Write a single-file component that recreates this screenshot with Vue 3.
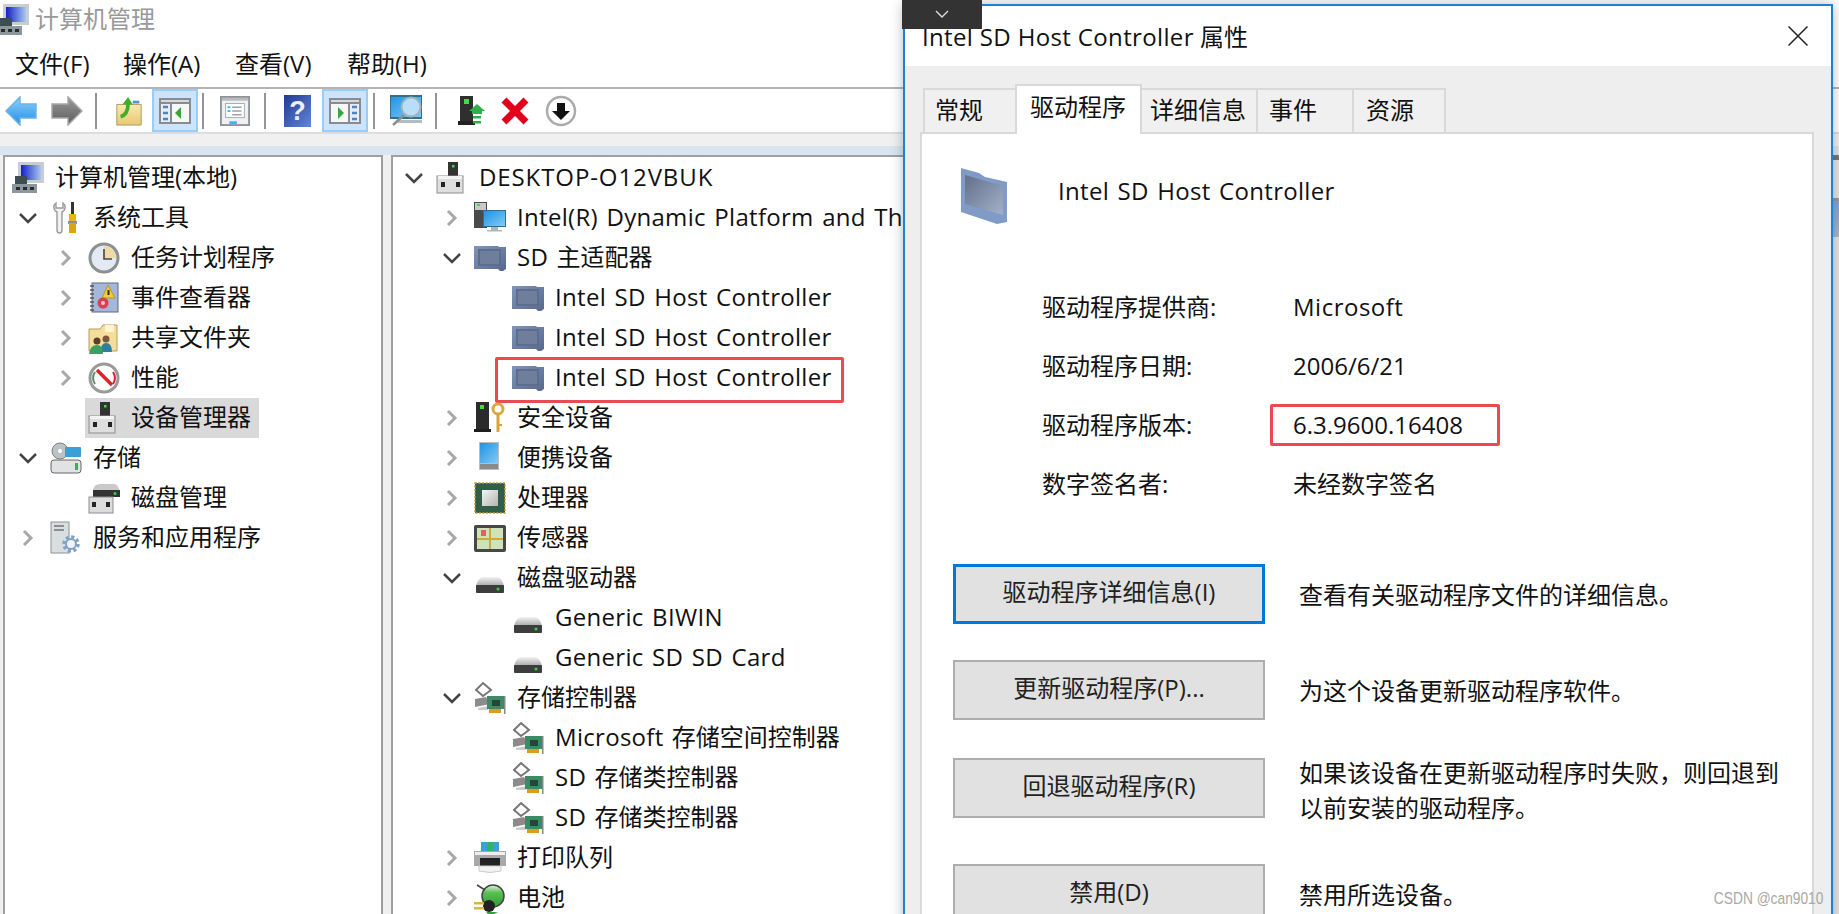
<script setup>
const base = '<rect x="1" y="15" width="24" height="16" fill="#dcdcdc" stroke="#8d8d8d"/><rect x="4" y="20" width="4" height="5" fill="#222"/><rect x="18" y="20" width="4" height="5" fill="#222"/>'
const chipCtl = '<path d="M9 1 L17 8 L9 14 L2 8Z" fill="#fff" stroke="#777" stroke-width="2"/><path d="M1 17 L12 15 L16 22 L1 25Z" fill="#8b8b8b"/><path d="M4 26 L14 24 V28 H4Z" fill="#ccc"/><rect x="13" y="14" width="17" height="13" fill="#3f8a66"/><rect x="18" y="18" width="8" height="6" fill="#27443a"/><rect x="15" y="27" width="12" height="4" fill="#e09a1e"/><rect x="30" y="14" width="1.5" height="18" fill="#888"/>'
const sdChip = '<path d="M0 4 H24 L25 5 H32 V27 L29 29 H26 L24 27 H0Z" fill="url(#sdg)"/><path d="M4 7 H27 V24 H4Z" fill="#5e6d8c"/><path d="M6 9 H25 V22 H6Z" fill="#6f7e9b"/>'
const drive = '<path d="M2 24 Q4 15 10 15 H22 Q28 15 30 24Z" fill="url(#drv)"/><rect x="2" y="23" width="28" height="8" rx="1" fill="#3d3d3d"/><circle cx="24" cy="27" r="1.5" fill="#37d04a"/>'
const icons = {
  root: '<rect x="6" y="0" width="26" height="21" fill="#c9cdd1"/><rect x="9" y="3" width="20" height="15" fill="url(#mon)"/><rect x="3" y="14" width="12" height="9" fill="#3c4e52"/><rect x="0" y="22" width="25" height="9" fill="#8a979c"/><rect x="4" y="25" width="4" height="3" fill="#2a2a2a"/><rect x="11" y="25" width="4" height="3" fill="#2a2a2a"/><rect x="18" y="25" width="4" height="3" fill="#2a2a2a"/>',
  tools: '<path d="M6 1 C3 3 3 8 7 10 V28 C7 32 12 32 12 28 V10 C16 8 16 3 13 1 V6 H6Z" fill="#f2f2f2" stroke="#9a9a9a" stroke-width="1.4"/><rect x="21" y="0" width="3" height="12" fill="#333"/><rect x="19" y="12" width="7" height="7" fill="#efb010"/><rect x="18" y="19" width="9" height="3" fill="#333" opacity=".55"/><rect x="19" y="21" width="7" height="10" fill="#e2a40c"/>',
  clock: '<circle cx="16" cy="16" r="14" fill="#e4eaf3" stroke="#8b9090" stroke-width="3"/><path d="M16 16 V4 A12 12 0 0 1 28 16Z" fill="#f0d9a8"/><path d="M16 7 V17 H24" fill="none" stroke="#444" stroke-width="1.6"/>',
  event: '<rect x="4" y="1" width="26" height="29" fill="#a4b7d8" stroke="#5b6a8a"/><path d="M2 4 H6 M2 8 H6 M2 12 H6 M2 16 H6 M2 20 H6 M2 24 H6 M2 28 H6" stroke="#555" stroke-width="1.4"/><path d="M20 3 L27 16 H14Z" fill="#f0cc3a" stroke="#b89a20"/><rect x="19.5" y="8" width="2" height="5" fill="#333"/><circle cx="15" cy="21" r="5.5" fill="#d8414f"/><circle cx="15" cy="21" r="2" fill="#f7c7cc"/>',
  share: '<path d="M1 7 H12 L15 3 H29 V29 H1Z" fill="#f5dd9a" stroke="#b69c5c"/><path d="M17 3 H26 V10 H17Z" fill="#fff4cf"/><circle cx="18" cy="17" r="3.5" fill="#7a5a3a"/><path d="M12 30 Q13 21 18 21 Q24 21 24 30Z" fill="#2f7f9f"/><circle cx="9" cy="19" r="3.5" fill="#5a3f2a"/><path d="M1 32 Q2 23 9 23 Q15 23 15 32Z" fill="#38a060"/>',
  perf: '<circle cx="16" cy="16" r="14" fill="#fdfdfd" stroke="#9a9a9a" stroke-width="3"/><path d="M7 10 A11 11 0 0 0 7 22" fill="none" stroke="#5b8f6a" stroke-width="2"/><path d="M25 10 A11 11 0 0 1 25 22" fill="none" stroke="#d82030" stroke-width="2"/><path d="M9 8 L24 23" stroke="#e0202e" stroke-width="3.5"/>',
  dev: '<rect x="12" y="0" width="10" height="15" fill="#333"/><rect x="16" y="3" width="2.5" height="2.5" fill="#3fdc4a"/>' + '<rect x="1" y="14" width="26" height="17" fill="#dedede" stroke="#8d8d8d"/><rect x="2" y="14" width="24" height="3" fill="#f3f3f3"/><rect x="5" y="20" width="4" height="5" fill="#222"/><rect x="20" y="20" width="4" height="5" fill="#222"/>',
  storage: '<circle cx="10" cy="9" r="8" fill="#bcc3c6" stroke="#808080"/><circle cx="10" cy="9" r="2" fill="#fff"/><rect x="15" y="5" width="16" height="10" rx="1" fill="#3a9fd6"/><rect x="1" y="18" width="30" height="13" rx="3" fill="#dfe3e3" stroke="#666"/><rect x="25" y="21" width="3" height="7" fill="#3ab04a"/>',
  diskm: '<path d="M5 8 Q6 2 12 2 H26 Q30 2 31 8Z" fill="#c9c9c9"/><rect x="5" y="8" width="27" height="7" fill="#333"/><circle cx="27" cy="11.500" r="1.500" fill="#37d04a"/>' + base,
  svc: '<rect x="1" y="0" width="18" height="31" fill="#d9dee1" stroke="#8d9296"/><path d="M4 4 H14 M4 8 H14" stroke="#6f7479" stroke-width="1.6"/><circle cx="21" cy="22" r="7" fill="none" stroke="#7fa2c6" stroke-width="3.500" stroke-dasharray="3 2.500"/><circle cx="21" cy="22" r="5" fill="#eef3f8" stroke="#7fa2c6" stroke-width="2"/>',
  dyn: '<rect x="0" y="0" width="13" height="26" fill="#4a4a4a"/><rect x="1" y="1" width="11" height="7" fill="#c8c8c8"/><rect x="3" y="2" width="3" height="2" fill="#3fdc4a"/><rect x="9" y="8" width="23" height="17" fill="#2f6f96"/><rect x="10" y="9" width="21" height="15" fill="url(#scr)"/><rect x="17" y="25" width="7" height="3" fill="#a9b6bd"/><rect x="13" y="28" width="15" height="1.500" fill="#aeb8bd"/>',
  sd: sdChip,
  sec: '<rect x="2" y="0" width="13" height="27" fill="#2b2b2b"/><rect x="6" y="3" width="4" height="4" fill="#3fdc4a"/><rect x="0" y="27" width="17" height="3" fill="#1f1f1f"/><circle cx="24" cy="7" r="5" fill="none" stroke="#dca83c" stroke-width="3"/><rect x="22.500" y="11" width="3" height="19" fill="#d8a53c"/><rect x="25" y="22" width="3" height="2" fill="#d8a53c"/>',
  port: '<rect x="5" y="0" width="20" height="28" fill="#bdbdbd"/><rect x="6" y="1" width="18" height="20" fill="url(#scr)"/><rect x="6" y="22" width="18" height="5" fill="#8a8a8a"/>',
  cpu: '<rect x="1" y="1" width="30" height="30" fill="#2f5f4a" stroke="#c99a3c" stroke-width="1.500" stroke-dasharray="2 1.500"/><rect x="8" y="8" width="16" height="16" fill="url(#cp)"/>',
  sensor: '<rect x="0" y="3" width="32" height="27" rx="2" fill="#474747"/><rect x="3" y="6" width="26" height="21" fill="#cfe3b8"/><path d="M16 6 V27 M3 17 H29" stroke="#d0a93a" stroke-width="2"/><rect x="7" y="8" width="5" height="6" fill="#e0606a"/>',
  disk: drive,
  sc: chipCtl,
  printer: '<rect x="7" y="0" width="18" height="10" fill="#3f9ed8"/><rect x="13" y="0" width="6" height="10" fill="#37b067"/><rect x="0" y="9" width="32" height="15" fill="#a9a9a9"/><rect x="1" y="10" width="30" height="3" fill="#eee"/><rect x="6" y="16" width="20" height="8" fill="#222"/><path d="M5 24 H27 V29 Q16 32 5 29Z" fill="#f3f3f3" stroke="#ccc"/>',
  battery: '<circle cx="19" cy="14" r="11" fill="url(#bat)" stroke="#444" stroke-width="1.500"/><path d="M3 3 L11 8" stroke="#444" stroke-width="1.500"/><circle cx="15" cy="24" r="6" fill="#222"/><rect x="0" y="20" width="10" height="2.500" fill="#d8b83c"/><rect x="0" y="25" width="10" height="2.500" fill="#d8b83c"/><path d="M12 30 H24 L20 32 H14Z" fill="#37a040"/>',
  back: '<path d="M1 15 L15 1 V8 H31 V22 H15 V29Z" fill="url(#bk)" stroke="#6fb2e4" stroke-width="1.500"/>',
  fwd: '<path d="M31 15 L17 1 V8 H1 V22 H17 V29Z" fill="url(#fw)" stroke="#a8a8a8" stroke-width="1.500"/>',
  up: '<path d="M3 9 H29 V31 H3Z" fill="url(#fld)" stroke="#a99a62"/><path d="M20 5 H27 V8 H20Z" fill="#4f94d4"/><path d="M7 22 Q15 20 15 8" fill="none" stroke="#3fae2a" stroke-width="4"/><path d="M9 9 L15 1 L20 9Z" fill="#3fae2a"/>',
  pl: '<rect width="32" height="26" fill="#888c92"/><rect x="2" y="2" width="28" height="2" fill="#d7d9dc"/><rect x="2" y="6" width="9" height="18" fill="#e6edf5"/><path d="M4 9 H9 M4 15 H9 M4 21 H9" stroke="#4f84c4" stroke-width="2.500"/><rect x="13" y="6" width="17" height="18" fill="#f7f7f7"/><path d="M22 9 L16 15 L22 21Z" fill="#3aa53a"/>',
  pr: '<rect width="32" height="26" fill="#888c92"/><rect x="2" y="2" width="28" height="2" fill="#d7d9dc"/><rect x="21" y="6" width="9" height="18" fill="#e6edf5"/><path d="M23 9 H28 M23 15 H28 M23 21 H28" stroke="#4f84c4" stroke-width="2.500"/><rect x="2" y="6" width="17" height="18" fill="#f7f7f7"/><path d="M9 9 L15 15 L9 21Z" fill="#3aa53a"/>',
  props: '<rect x="1" y="1" width="30" height="30" fill="#eef0f2" stroke="#8f9397" stroke-width="2"/><rect x="2" y="2" width="28" height="3" fill="#b8bbbe"/><rect x="6" y="8" width="20" height="15" fill="#fff" stroke="#a6a9ac"/><path d="M13 12 H23 M13 16 H23 M13 20 H23" stroke="#9aa3ab" stroke-width="1.600"/><rect x="8" y="11" width="3" height="2" fill="#38b6ee"/><rect x="8" y="15" width="3" height="2" fill="#38b6ee"/><rect x="10" y="27" width="8" height="3" fill="#38b6ee"/>',
  help: '<rect x="0" y="0" width="27" height="32" fill="url(#hp)"/><text x="13.500" y="25" font-family="Liberation Sans, sans-serif" font-size="27" font-weight="700" text-anchor="middle" fill="#f0f0f4">?</text>',
  mon: '<rect x="0" y="1" width="32" height="22" fill="url(#scr)" stroke="#2d7090" stroke-width="2"/><rect x="8" y="25" width="24" height="3" fill="#b5bcc0"/><path d="M3 30 L14 20" stroke="#8a8f93" stroke-width="2.500"/><circle cx="21" cy="12" r="9.500" fill="#b9defa" stroke="#a3b2bd" stroke-width="2"/>',
  towerUp: '<rect x="2" y="1" width="13" height="25" fill="#2f2f2f"/><rect x="6" y="4" width="5" height="5" fill="#3fdc4a"/><rect x="0" y="26" width="17" height="4" fill="#222"/><path d="M11 16 L19 9 L27 16Z" fill="#2fb04a"/><rect x="14" y="16" width="10" height="3" fill="#2fb04a"/><rect x="15" y="21" width="8" height="2.500" fill="#2fb04a"/><rect x="15" y="26" width="8" height="2.500" fill="#2fb04a"/>',
  del: '<path d="M4 4 L26 26 M26 4 L4 26" stroke="#e0001b" stroke-width="7"/>',
  down: '<circle cx="16" cy="16" r="14" fill="#fff" stroke="#ababab" stroke-width="2.500"/><rect x="12" y="8" width="8" height="8" fill="#111"/><path d="M7 16 H25 L16 25Z" fill="#111"/>',
}

// Split a label into Latin and CJK runs so that Latin words can get the wider
// tracking of the original Windows UI font without spreading the CJK glyphs.
function runs(s) {
  return s
    .split(/([A-Za-z][A-Za-z0-9 ().\-]*[A-Za-z0-9)])/)
    .filter(Boolean)
    .map((t) => ({
      t,
      lat: /^[A-Za-z]/.test(t) && t.length > 1,
      caps: /^[A-Z][A-Z0-9\-]{3,}$/.test(t),
    }))
}

const leftTree = [
  { l: 0, icon: 'root', text: '计算机管理(本地)' },
  { l: 1, c: 'open', icon: 'tools', text: '系统工具' },
  { l: 2, c: 'closed', icon: 'clock', text: '任务计划程序' },
  { l: 2, c: 'closed', icon: 'event', text: '事件查看器' },
  { l: 2, c: 'closed', icon: 'share', text: '共享文件夹' },
  { l: 2, c: 'closed', icon: 'perf', text: '性能' },
  { l: 2, icon: 'dev', text: '设备管理器', sel: true },
  { l: 1, c: 'open', icon: 'storage', text: '存储' },
  { l: 2, icon: 'diskm', text: '磁盘管理' },
  { l: 1, c: 'closed', icon: 'svc', text: '服务和应用程序' },
]
const rightTree = [
  { l: 0, c: 'open', icon: 'dev', text: 'DESKTOP-O12VBUK' },
  { l: 1, c: 'closed', icon: 'dyn', text: 'Intel(R) Dynamic Platform and Thermal Framework' },
  { l: 1, c: 'open', icon: 'sd', text: 'SD 主适配器' },
  { l: 2, icon: 'sd', text: 'Intel SD Host Controller' },
  { l: 2, icon: 'sd', text: 'Intel SD Host Controller' },
  { l: 2, icon: 'sd', text: 'Intel SD Host Controller', mark: true },
  { l: 1, c: 'closed', icon: 'sec', text: '安全设备' },
  { l: 1, c: 'closed', icon: 'port', text: '便携设备' },
  { l: 1, c: 'closed', icon: 'cpu', text: '处理器' },
  { l: 1, c: 'closed', icon: 'sensor', text: '传感器' },
  { l: 1, c: 'open', icon: 'disk', text: '磁盘驱动器' },
  { l: 2, icon: 'disk', text: 'Generic BIWIN' },
  { l: 2, icon: 'disk', text: 'Generic SD SD Card' },
  { l: 1, c: 'open', icon: 'sc', text: '存储控制器' },
  { l: 2, icon: 'sc', text: 'Microsoft 存储空间控制器' },
  { l: 2, icon: 'sc', text: 'SD 存储类控制器' },
  { l: 2, icon: 'sc', text: 'SD 存储类控制器' },
  { l: 1, c: 'closed', icon: 'printer', text: '打印队列' },
  { l: 1, c: 'closed', icon: 'battery', text: '电池' },
]
const menus = ['文件(F)', '操作(A)', '查看(V)', '帮助(H)']
const tabs = [
  { t: '常规', cls: 't1' },
  { t: '驱动程序', cls: 't2 active' },
  { t: '详细信息', cls: 't3' },
  { t: '事件', cls: 't4' },
  { t: '资源', cls: 't5' },
]
const fields = [
  { k: '驱动程序提供商:', v: 'Microsoft' },
  { k: '驱动程序日期:', v: '2006/6/21' },
  { k: '驱动程序版本:', v: '6.3.9600.16408', mark: true },
  { k: '数字签名者:', v: '未经数字签名' },
]
const actions = [
  { b: '驱动程序详细信息(I)', d: ['查看有关驱动程序文件的详细信息。'], cls: 'a1 focus' },
  { b: '更新驱动程序(P)...', d: ['为这个设备更新驱动程序软件。'], cls: 'a2' },
  { b: '回退驱动程序(R)', d: ['如果该设备在更新驱动程序时失败，则回退到', '以前安装的驱动程序。'], cls: 'a3' },
  { b: '禁用(D)', d: ['禁用所选设备。'], cls: 'a4' },
]
</script>

<template>
  <div class="app">
    <svg class="defs" width="0" height="0" aria-hidden="true">
      <defs>
        <linearGradient id="mon" x1="0" x2="1" y1="0" y2="0"><stop offset="0" stop-color="#1420c8" /><stop offset="1" stop-color="#a8c8f0" /></linearGradient>
        <linearGradient id="sdg" x1="0" x2="1" y1="0" y2="1"><stop offset="0" stop-color="#7f95bd" /><stop offset="1" stop-color="#56688c" /></linearGradient>
        <linearGradient id="drv" x1="0" x2="0" y1="0" y2="1"><stop offset="0" stop-color="#f2f2f2" /><stop offset="1" stop-color="#a8a8a8" /></linearGradient>
        <linearGradient id="scr" x1="0" x2="1" y1="0" y2="1"><stop offset="0" stop-color="#1f93e4" /><stop offset="1" stop-color="#7fcbf8" /></linearGradient>
        <linearGradient id="cp" x1="0" x2="1" y1="0" y2="1"><stop offset="0" stop-color="#f4f4f4" /><stop offset="1" stop-color="#b4b4b4" /></linearGradient>
        <linearGradient id="bat" x1="0" x2="0" y1="0" y2="1"><stop offset="0" stop-color="#e6f3e6" /><stop offset=".35" stop-color="#59c04f" /><stop offset="1" stop-color="#2f9a38" /></linearGradient>
        <linearGradient id="bk" x1="0" x2="0" y1="0" y2="1"><stop offset="0" stop-color="#8fd0fb" /><stop offset="1" stop-color="#1f8fe8" /></linearGradient>
        <linearGradient id="fw" x1="0" x2="0" y1="0" y2="1"><stop offset="0" stop-color="#9a9a9a" /><stop offset="1" stop-color="#5c5c5c" /></linearGradient>
        <linearGradient id="fld" x1="0" x2="0" y1="0" y2="1"><stop offset="0" stop-color="#fbe9ae" /><stop offset="1" stop-color="#e8c676" /></linearGradient>
        <linearGradient id="hp" x1="0" x2="1" y1="0" y2="1"><stop offset="0" stop-color="#223a8f" /><stop offset="1" stop-color="#5f86de" /></linearGradient>
        <linearGradient id="chip" x1="0" x2="1" y1="0" y2="1"><stop offset="0" stop-color="#626f8c" /><stop offset="1" stop-color="#a3b1c8" /></linearGradient>
      </defs>
    </svg>

    <header class="titlebar">
      <svg class="ic title-ic" viewBox="0 0 32 32" v-html="icons.root"></svg>
      <span class="title-text">计算机管理</span>
    </header>
    <nav class="menubar">
      <span v-for="m in menus" :key="m">{{ m }}</span>
    </nav>
    <div class="toolbar">
      <svg class="tb back" viewBox="0 0 32 30" v-html="icons.back"></svg>
      <svg class="tb fwd" viewBox="0 0 32 30" v-html="icons.fwd"></svg>
      <i class="sep s1"></i>
      <svg class="tb up" viewBox="0 0 32 32" v-html="icons.up"></svg>
      <span class="toggle t-left"><svg viewBox="0 0 32 26" v-html="icons.pl"></svg></span>
      <i class="sep s2"></i>
      <svg class="tb props" viewBox="0 0 32 32" v-html="icons.props"></svg>
      <i class="sep s3"></i>
      <svg class="tb help" viewBox="0 0 27 32" v-html="icons.help"></svg>
      <span class="toggle t-right"><svg viewBox="0 0 32 26" v-html="icons.pr"></svg></span>
      <i class="sep s4"></i>
      <svg class="tb mon" viewBox="0 0 32 32" v-html="icons.mon"></svg>
      <i class="sep s5"></i>
      <svg class="tb tower" viewBox="0 0 28 32" v-html="icons.towerUp"></svg>
      <svg class="tb del" viewBox="0 0 30 30" v-html="icons.del"></svg>
      <svg class="tb down" viewBox="0 0 32 32" v-html="icons.down"></svg>
    </div>
    <div class="greyband"></div>

    <main class="panels">
      <section class="pane left">
        <div v-for="(n, i) in leftTree" :key="i" class="row" :class="'l' + n.l">
          <span v-if="n.l" class="slot">
            <svg v-if="n.c" class="chev" viewBox="0 0 20 20">
              <polyline v-if="n.c === 'open'" class="c-open" points="2,6 10,14 18,6" />
              <polyline v-else class="c-closed" points="6,3 13,10 6,17" />
            </svg>
          </span>
          <span class="item" :class="{ sel: n.sel }">
            <svg class="ic" viewBox="0 0 32 32" v-html="icons[n.icon]"></svg>
            <span class="txt">{{ n.text }}</span>
          </span>
        </div>
      </section>
      <section class="pane right">
        <div v-for="(n, i) in rightTree" :key="i" class="row" :class="'l' + n.l">
          <i v-if="n.mark" class="redbox tree-box"></i>
          <span class="slot">
            <svg v-if="n.c" class="chev" viewBox="0 0 20 20">
              <polyline v-if="n.c === 'open'" class="c-open" points="2,6 10,14 18,6" />
              <polyline v-else class="c-closed" points="6,3 13,10 6,17" />
            </svg>
          </span>
          <span class="item">
            <svg class="ic" viewBox="0 0 32 32" v-html="icons[n.icon]"></svg>
            <span class="txt"><span v-for="(r, k) in runs(n.text)" :key="k" :class="{ lat: r.lat, caps: r.caps }">{{ r.t }}</span></span>
          </span>
        </div>
      </section>
      <aside class="actions"><div class="act-head"></div></aside>
    </main>

    <section class="dialog">
      <div class="dlg-title">
        <span class="dlg-text"><span class="lat-s">Intel SD Host Controller</span> 属性</span>
        <svg class="close" viewBox="0 0 20 20"><path d="M0.500 0.500 L19.500 19.500 M19.500 0.500 L0.500 19.500" /></svg>
      </div>
      <div class="dlg-body">
        <div class="tabs">
          <span v-for="t in tabs" :key="t.t" class="tab" :class="t.cls">{{ t.t }}</span>
        </div>
        <div class="tabpanel">
          <div class="dev-head">
            <svg class="dev-ic" viewBox="0 0 46 56">
              <path d="M0 0 L18 5 L24 9 L46 14 V54 L36 56 L0 44Z" fill="#7f9bc6" />
              <path d="M4 7 L42 18 V47 L4 36Z" fill="url(#chip)" />
            </svg>
            <span class="dev-name lat">Intel SD Host Controller</span>
          </div>
          <div class="fields">
            <div v-for="f in fields" :key="f.k" class="field">
              <span class="f-k">{{ f.k }}</span>
              <span class="f-v"><span v-for="(r, k) in runs(f.v)" :key="k" :class="{ lat: r.lat }">{{ r.t }}</span><i v-if="f.mark" class="redbox ver-box"></i></span>
            </div>
          </div>
          <div class="acts">
            <div v-for="a in actions" :key="a.b" class="act" :class="a.cls">
              <div class="btn">{{ a.b }}</div>
              <div class="desc"><div v-for="d in a.d" :key="d">{{ d }}</div></div>
            </div>
          </div>
        </div>
      </div>
    </section>

    <div class="drop">
      <svg viewBox="0 0 14 8" class="drop-chev"><polyline points="1,1 7,7 13,1" /></svg>
    </div>
    <div class="mark">CSDN @can9010</div>
  </div>
</template>

<style>
html, body { margin: 0; overflow: hidden; background: #fff; }
</style>

<style scoped>
.app {
  position: relative;
  width: 1839px;
  height: 914px;
  overflow: hidden;
  display: flex;
  flex-direction: column;
  background: #fff;
  color: #111;
  font-family: "Open Sans", "Noto Sans CJK SC", sans-serif;
  font-size: 24px;
}
.lat { letter-spacing: 0.3px; word-spacing: 2px; }
.caps { letter-spacing: 0.9px; }
.f-v .lat { letter-spacing: 0.5px; }
.lat-s { letter-spacing: 0.35px; }
.defs { position: absolute; }
.ic { width: 32px; height: 32px; flex: none; overflow: visible; }
.titlebar {
  height: 40px;
  display: flex;
  align-items: center;
  color: #999;
  line-height: 36px;
}
.title-text { padding-bottom: 2px; }
.title-ic { margin-left: -3px; margin-right: 6px; }
.menubar {
  height: 47px;
  display: flex;
  align-items: center;
  padding-left: 15px;
  color: #111;
}
.menubar span { width: 112px; line-height: 44px; }
.menubar span:first-child { width: 108px; }
.toolbar {
  height: 43px;
  border-top: 2px solid #b4b4b4;
  border-bottom: 2px solid #ddd;
  display: flex;
  align-items: center;
  background: #fff;
}
.tb { flex: none; }
.back { width: 32px; height: 30px; margin-left: 5px; }
.fwd { width: 32px; height: 30px; margin-left: 14px; }
.sep { flex: none; width: 2px; height: 36px; background: #949494; }
.s1 { margin-left: 12px; }
.up { width: 30px; height: 32px; margin-left: 17px; }
.toggle {
  flex: none;
  box-sizing: border-box;
  width: 46px;
  height: 43px;
  background: #cce4fb;
  border: 2px solid #99ccf7;
  display: flex;
  align-items: center;
  justify-content: center;
}
.toggle svg { width: 32px; height: 26px; }
.t-left { margin-left: 8px; }
.s2 { margin-left: 4px; }
.props { width: 30px; height: 32px; margin-left: 16px; }
.s3 { margin-left: 14px; }
.help { width: 27px; height: 32px; margin-left: 18px; }
.t-right { margin-left: 11px; }
.s4 { margin-left: 5px; }
.mon { width: 32px; height: 32px; margin-left: 15px; }
.s5 { margin-left: 13px; }
.tower { width: 28px; height: 32px; margin-left: 21px; }
.del { width: 30px; height: 30px; margin-left: 14px; }
.down { width: 32px; height: 32px; margin-left: 15px; }
.greyband {
  height: 21px;
  box-sizing: border-box;
  background: linear-gradient(#f0f0f0 0 12px, #dbe5ef 12px);
}
.panels {
  flex: 1;
  min-height: 0;
  display: flex;
  background: #f0f0f0;
  padding-left: 3px;
  gap: 8px;
}
.pane {
  box-sizing: border-box;
  border: 2px solid #a0a0a0;
  border-bottom: 0;
  background: #fff;
  overflow: hidden;
  padding-top: 1px;
}
.left { width: 380px; flex: none; }
.right { width: 1310px; flex: none; }
.actions {
  flex: 1;
  border-top: 5px solid #787878;
  background: #e4e4e4;
  padding-top: 38px;
}
.act-head { height: 36px; border-top: 3px solid #999; background: linear-gradient(#7fa6d8, #a8b8cc); }
.row {
  position: relative;
  height: 40px;
  display: flex;
  align-items: center;
  white-space: nowrap;
}
.slot { width: 38px; flex: none; display: flex; align-items: center; }
.chev { width: 20px; height: 20px; margin-left: 5.500px; fill: none; }
.c-open { stroke: #444; stroke-width: 2.500; }
.c-closed { stroke: #a8a8a8; stroke-width: 3; }
.item { display: flex; align-items: center; gap: 11px; height: 40px; }
.txt { line-height: 38px; padding-bottom: 2px; word-spacing: 2px; }
.left .l0, .left .l1 { padding-left: 7px; }
.left .l2 { padding-left: 45px; }
.right .l0 { padding-left: 5px; }
.right .l1 { padding-left: 43px; }
.right .l2 { padding-left: 81px; }
.sel { background: #d9d9d9; margin-left: -3px; padding-left: 3px; padding-right: 8px; }
.redbox {
  position: absolute;
  box-sizing: border-box;
  border: 3px solid #ea4b50;
  border-radius: 2px;
}
.tree-box { left: 102px; width: 349px; top: -1px; height: 46px; }
.dialog {
  position: absolute;
  left: 903px;
  top: 4px;
  width: 930px;
  height: 930px;
  box-sizing: border-box;
  border: 2px solid #1883d7;
  display: flex;
  flex-direction: column;
  background: #fff;
  box-shadow: 0 0 12px rgba(0, 0, 0, 0.28);
}
.dlg-title {
  height: 60px;
  flex: none;
  display: flex;
  align-items: center;
  justify-content: space-between;
  padding: 0 23px 0 17px;
  color: #111;
}
.dlg-text { padding-bottom: 2px; }
.close { width: 20px; height: 20px; fill: none; stroke: #222; stroke-width: 1.500; }
.dlg-body {
  flex: 1;
  min-height: 0;
  background: #eee;
  padding: 18px 17px 0 15px;
  display: flex;
  flex-direction: column;
}
.tabs {
  flex: none;
  height: 48px;
  display: flex;
  align-items: flex-end;
  padding-left: 3px;
  position: relative;
  z-index: 1;
}
.tab {
  box-sizing: border-box;
  height: 44px;
  border: 2px solid #d9d9d9;
  border-bottom: 0;
  margin-left: -2px;
  display: flex;
  align-items: center;
  background: #f0f0f0;
  color: #111;
  padding-bottom: 5px;
}
.t1 { width: 94px; margin-left: 0; padding-left: 10px; }
.t2 { width: 127px; padding-left: 13px; }
.t3 { width: 118px; padding-left: 8px; }
.t4 { width: 98px; padding-left: 11px; }
.t5 { width: 94px; padding-left: 12px; }
.active {
  height: 50px;
  margin-bottom: -2px;
  background: #fff;
  padding-bottom: 9px;
}
.tabpanel {
  flex: 1;
  min-height: 0;
  background: #fff;
  border: 2px solid #d9d9d9;
  padding: 34px 0 0 39px;
}
.dev-head { display: flex; height: 56px; gap: 51px; }
.dev-ic { width: 46px; height: 56px; flex: none; }
.dev-name { line-height: 45px; }
.fields { margin-top: 53px; margin-left: 81px; }
.field { height: 59px; display: flex; align-items: center; line-height: 40px; }
.f-k { width: 251px; flex: none; }
.f-v { position: relative; }
.ver-box { left: -23px; top: -1px; width: 230px; height: 42px; }
.acts { margin-top: 51px; margin-left: -8px; }
.act { display: flex; align-items: flex-start; gap: 34px; }
.a1 { height: 96px; }
.a2 { height: 98px; }
.a3 { height: 106px; }
.a4 { height: 96px; }
.btn {
  box-sizing: border-box;
  flex: none;
  width: 312px;
  height: 60px;
  background: #e1e1e1;
  border: 2px solid #adadad;
  display: flex;
  align-items: center;
  justify-content: center;
  color: #222;
  padding-bottom: 7px;
}
.focus .btn { border: 3px solid #0078d7; }
.desc { line-height: 35px; padding-top: 13px; color: #111; }
.a3 .desc { padding-top: 0; margin-top: -3px; }
.drop {
  position: absolute;
  left: 902px;
  top: 0;
  width: 80px;
  height: 29px;
  background: #333;
  display: flex;
  justify-content: center;
  padding-top: 10px;
  box-sizing: border-box;
}
.drop-chev { width: 14px; height: 8px; fill: none; stroke: #ddd; stroke-width: 1.400; }
.mark {
  position: absolute;
  right: 16px;
  top: 889px;
  font-family: "Liberation Sans", sans-serif;
  font-size: 16px;
  line-height: 20px;
  color: #a8a8a8;
  transform: scaleX(0.86);
  transform-origin: right center;
}
</style>
